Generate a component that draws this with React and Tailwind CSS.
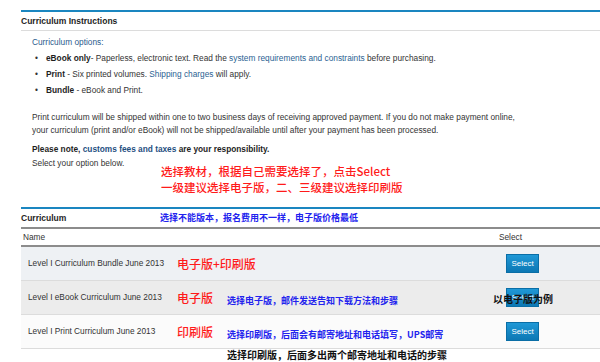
import React from 'react';

const rows = [
  { name: 'Level I Curriculum Bundle June 2013', tag: '电子版+印刷版', bg: 'bg-[#eef1f4]' },
  { name: 'Level I eBook Curriculum June 2013', tag: '电子版', note: '选择电子版，邮件发送告知下载方法和步骤', bg: 'bg-[#ececec]', example: true },
  { name: 'Level I Print Curriculum June 2013', tag: '印刷版', note: '选择印刷版，后面会有邮寄地址和电话填写，UPS邮寄', bg: 'bg-[#fbfbfb]' },
];

function SelectButton() {
  return (
    <button className="w-[33px] h-[19px] mr-[61px] bg-gradient-to-b from-[#1f98d6] to-[#0c78b4] border border-[#0a6ea6] text-white text-[8px] leading-none">
      Select
    </button>
  );
}

export default function App() {
  const cjk = "font-['Noto_Sans_CJK_SC',sans-serif]";
  return (
    <div className="w-[600px] h-[362px] bg-white overflow-hidden pl-[21px] font-['Liberation_Sans',Arial,sans-serif] text-[#333] text-[8.3px]">
      <div className="h-[10px]" />
      <div className="h-[2px] bg-[#1a86c0]" />

      {/* Instructions */}
      <div className="h-[18px] flex items-center font-bold text-[8.5px] text-[#1e1e1e]">Curriculum Instructions</div>
      <div className="h-px bg-[#dcdcdc]" />

      <div className="pl-[11px]">
        <div className="mt-[3px] h-[16px] flex items-center text-[#2a5a8c]">Curriculum options:</div>
        <div className="h-[16px] flex items-center">
          <span className="w-[14px] pl-[3px]">•</span>
          <span><b className="text-[#1e1e1e]">eBook only</b>- Paperless, electronic text. Read the <span className="text-[#2b5f93]">system requirements and constraints</span> before purchasing.</span>
        </div>
        <div className="h-[16px] flex items-center">
          <span className="w-[14px] pl-[3px]">•</span>
          <span><b className="text-[#1e1e1e]">Print</b> - Six printed volumes. <span className="text-[#2b5f93]">Shipping charges</span> will apply.</span>
        </div>
        <div className="h-[16px] flex items-center">
          <span className="w-[14px] pl-[3px]">•</span>
          <span><b className="text-[#1e1e1e]">Bundle</b> - eBook and Print.</span>
        </div>

        <div className="mt-[13px] h-[13px] flex items-center">Print curriculum will be shipped within one to two business days of receiving approved payment. If you do not make payment online,</div>
        <div className="h-[13px] flex items-center">your curriculum (print and/or eBook) will not be shipped/available until after your payment has been processed.</div>

        <div className="mt-[5px] h-[14px] flex items-center font-bold text-[#1e1e1e]">
          Please note,&nbsp;<span className="text-[#1f4f7f]">customs fees and taxes</span>&nbsp;are your responsibility.
        </div>

        <div className="flex">
          <div className="w-[129px] h-[14px] flex items-center">Select your option below.</div>
          <div className={`pt-[7px] text-[11.5px] leading-[16px] font-medium text-[#ff1a1a] ${cjk}`}>
            <div>选择教材，根据自己需要选择了，点击Select</div>
            <div>一级建议选择电子版，二、三级建议选择印刷版</div>
          </div>
        </div>
      </div>

      {/* Curriculum table */}
      <div className="mt-[12px] h-[2px] bg-[#1a86c0]" />
      <div className="h-[18px] flex items-center">
        <span className="w-[139px] font-bold text-[8.5px] text-[#1e1e1e]">Curriculum</span>
        <span className={`text-[9px] font-bold text-[#2222ee] ${cjk}`}>选择不能版本，报名费用不一样，电子版价格最低</span>
      </div>
      <div className="h-[2px] bg-[#8c8c8c]" />
      <div className="h-[16px] flex items-center justify-between pl-[2px]">
        <span>Name</span>
        <span className="mr-[78px]">Select</span>
      </div>
      <div className="h-[2px] bg-[#8c8c8c]" />

      {rows.map((r) => (
        <div key={r.name} className={`relative h-[34px] flex items-center border-b border-[#dcdcdc] pl-[7px] ${r.bg}`}>
          <span className="w-[149px] whitespace-nowrap">{r.name}</span>
          <span className={`w-[50px] whitespace-nowrap text-[12px] font-medium text-[#ff1a1a] ${cjk}`}>{r.tag}</span>
          <span className={`flex-1 mt-[6px] whitespace-nowrap text-[9px] font-bold text-[#2222ee] ${cjk}`}>{r.note}</span>
          <SelectButton />
          {r.example && (
            <span className={`absolute left-[472px] top-1/2 -translate-y-1/2 text-[10px] font-bold text-[#111] ${cjk}`}>以电子版为例</span>
          )}
        </div>
      ))}

      <div className={`pl-[206px] text-[10px] leading-[12px] font-bold text-[#111] ${cjk}`}>选择印刷版，后面多出两个邮寄地址和电话的步骤</div>
    </div>
  );
}
